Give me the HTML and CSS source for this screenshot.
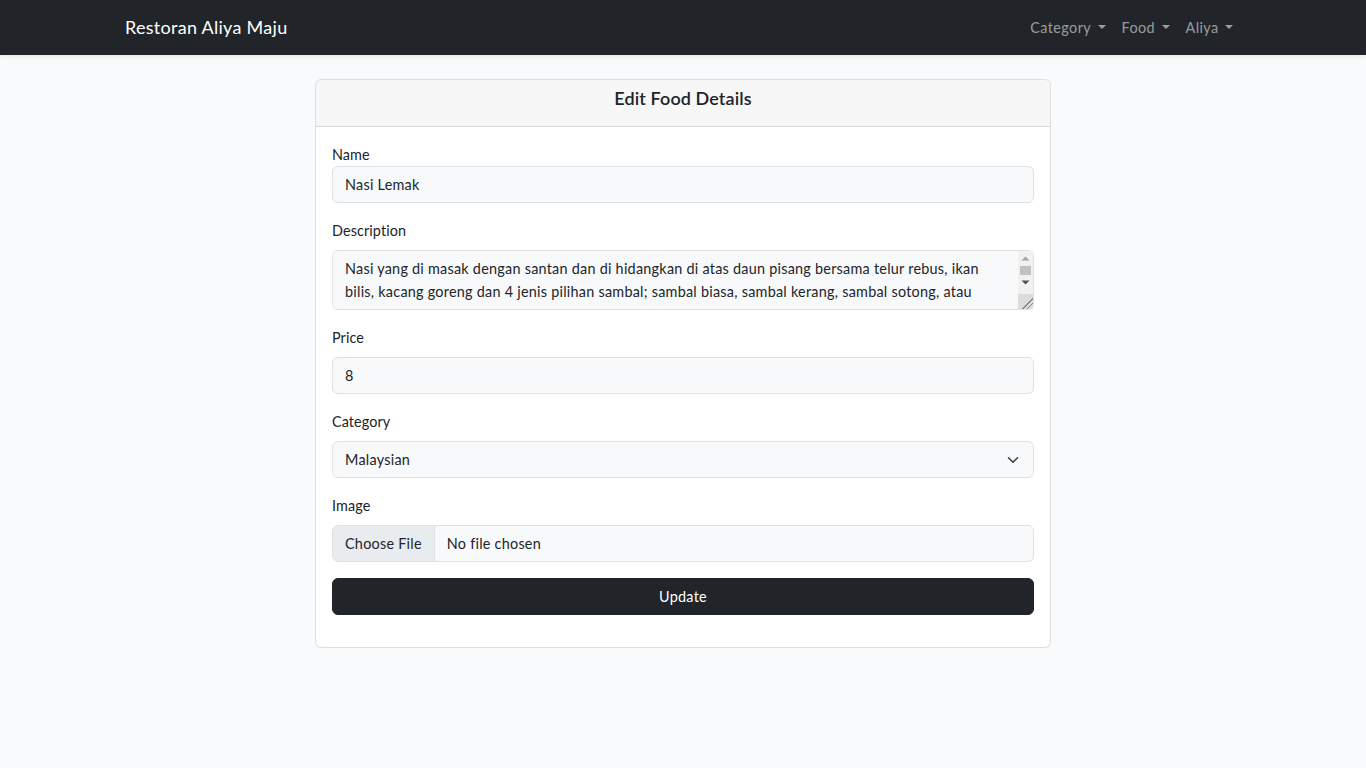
FILE: index.html
```html
<!DOCTYPE html>
<html lang="en">
<head>
<meta charset="utf-8">
<title>Restoran Aliya Maju</title>
<link rel="stylesheet" href="styles.css">
</head>
<body>
<nav class="navbar">
  <div class="container nav-inner">
    <a class="brand" href="#">Restoran Aliya Maju</a>
    <ul class="nav-links">
      <li><a class="nav-link dropdown" href="#">Category</a></li>
      <li><a class="nav-link dropdown" href="#">Food</a></li>
      <li><a class="nav-link dropdown" href="#">Aliya</a></li>
    </ul>
  </div>
</nav>
<main class="main">
  <div class="container">
    <div class="row">
      <div class="card">
        <div class="card-header"><h5 class="card-title">Edit Food Details</h5></div>
        <form class="card-body">
          <div class="field">
            <label class="label first">Name</label>
            <input class="control" type="text" value="Nasi Lemak">
          </div>
          <div class="field">
            <label class="label">Description</label>
            <div class="textarea-wrap">
              <textarea class="control textarea" rows="2">Nasi yang di masak dengan santan dan di hidangkan di atas daun pisang bersama telur rebus, ikan bilis, kacang goreng dan 4 jenis pilihan sambal; sambal biasa, sambal kerang, sambal sotong, atau sambal ayam.</textarea>
              <div class="fake-scroll" aria-hidden="true">
                <div class="sb-btn"><svg width="15" height="15" viewBox="0 0 15 15"><path d="M3.5 9.5 7.5 5.5 11.5 9.5Z" fill="#a3a3a3"/></svg></div>
                <div class="sb-thumb"></div>
                <div class="sb-btn"><svg width="15" height="15" viewBox="0 0 15 15"><path d="M3.5 5.5 7.5 9.5 11.5 5.5Z" fill="#505050"/></svg></div>
              </div>
            </div>
          </div>
          <div class="field">
            <label class="label">Price</label>
            <input class="control" type="text" value="8">
          </div>
          <div class="field">
            <label class="label">Category</label>
            <div class="select-wrap">
              <select class="control select"><option>Malaysian</option></select>
              <svg class="chevron" width="16" height="12" viewBox="0 0 16 16"><path fill="none" stroke="#343a40" stroke-linecap="round" stroke-linejoin="round" stroke-width="2" d="m2 5 6 6 6-6"/></svg>
            </div>
          </div>
          <div class="field">
            <label class="label">Image</label>
            <div class="control file">
              <span class="file-btn">Choose File</span>
              <span class="file-name">No file chosen</span>
            </div>
          </div>
          <div class="field">
            <button type="button" class="btn">Update</button>
          </div>
        </form>
      </div>
    </div>
  </div>
</main>
</body>
</html>
```

FILE: styles.css
```css
* { box-sizing: border-box; }
html, body { margin: 0; }
body {
  font-family: "Lato", "Noto Sans", sans-serif;
  font-size: 14.4px;
  line-height: 1.6;
  letter-spacing: 0.25px;
  color: #212529;
  background: #f8fafc;
}
.container {
  width: 1140px;
  margin: 0 auto;
  padding: 0 12px;
}
.navbar {
  background: #212529;
  padding: 8px 0;
  box-shadow: 0 2px 4px rgba(0,0,0,.075);
}
.nav-inner {
  display: flex;
  align-items: center;
  justify-content: space-between;
}
.brand {
  color: #fff;
  text-decoration: none;
  font-size: 18px;
  line-height: 28.8px;
  letter-spacing: 0.28px;
  padding: 5px 0;
  margin-right: 16px;
}
.nav-links {
  list-style: none;
  margin: 0;
  padding: 0;
  display: flex;
}
.nav-link {
  display: block;
  color: rgba(255,255,255,.55);
  text-decoration: none;
  padding: 8px 8px;
  line-height: 23.04px;
  letter-spacing: 0.4px;
}
.dropdown::after {
  content: "";
  display: inline-block;
  margin-left: 0.45em;
  vertical-align: 0.255em;
  border-top: 0.3em solid;
  border-right: 0.3em solid transparent;
  border-left: 0.3em solid transparent;
}
.main { padding: 24px 0; }
.row {
  display: flex;
  justify-content: center;
}
.card {
  width: 736px;
  background: #fff;
  border: 1px solid rgba(0,0,0,.125);
  border-radius: 6px;
}
.card-header {
  background: rgba(0,0,0,.03);
  border-bottom: 1px solid rgba(0,0,0,.125);
  padding: 8px 16px;
  height: 47px;
  border-radius: 5px 5px 0 0;
  text-align: center;
}
.card-title {
  margin: 0;
  font-size: 18px;
  font-weight: 600;
  line-height: 21.6px;
  letter-spacing: 0.1px;
}
.card-body {
  padding: 16px 16px;
  display: flex;
  flex-direction: column;
  gap: 16px;
}
.field {
  display: flex;
  flex-direction: column;
}
.label {
  line-height: 23.04px;
  margin-bottom: 8px;
  letter-spacing: 0.1px;
}
.label.first { margin-bottom: 0; }
.control {
  display: block;
  width: 100%;
  font: inherit;
  font-size: 14.4px;
  line-height: 23.04px;
  letter-spacing: 0.25px;
  color: #212529;
  background: #f8f9fa;
  border: 1px solid #dee2e6;
  border-radius: 6px;
  padding: 6px 12px;
  height: 37px;
  outline: none;
}
.textarea-wrap {
  position: relative;
}
.textarea {
  height: 60px;
  padding-right: 27px;
  resize: vertical;
  overflow: hidden;
}
.textarea::-webkit-resizer {
  background-color: #dcdcdc;
  background-image:
    linear-gradient(135deg, transparent 0 62%, #8a8a8a 62% 67%, transparent 67% 78%, #8a8a8a 78% 83%, transparent 83%);
}
.fake-scroll {
  position: absolute;
  top: 1px;
  right: 1px;
  width: 15px;
  height: 43px;
  background: #f1f1f1;
  display: flex;
  flex-direction: column;
}
.sb-btn {
  height: 15px;
  flex: none;
}
.sb-btn svg { display: block; }
.sb-thumb {
  height: 9px;
  margin: 0 2px;
  background: #c1c1c1;
  flex: none;
}
.select-wrap {
  position: relative;
}
.select {
  appearance: none;
  -webkit-appearance: none;
  padding-right: 36px;
}
.chevron {
  position: absolute;
  right: 13px;
  top: 12.5px;
  pointer-events: none;
}
.file {
  display: flex;
  align-items: stretch;
  padding: 0;
  overflow: hidden;
}
.file-btn {
  background: #e9ecef;
  border-right: 1px solid #dee2e6;
  padding: 6px 12px;
  line-height: 23.04px;
}
.file-name {
  padding: 6px 12px;
  line-height: 23.04px;
}
.btn {
  display: block;
  width: 100%;
  height: 37px;
  font: inherit;
  font-size: 14.4px;
  line-height: 23.04px;
  letter-spacing: 0.25px;
  color: #fff;
  background: #212529;
  border: 1px solid #212529;
  border-radius: 6px;
  padding: 6px 12px;
  margin-bottom: 16px;
}
```
